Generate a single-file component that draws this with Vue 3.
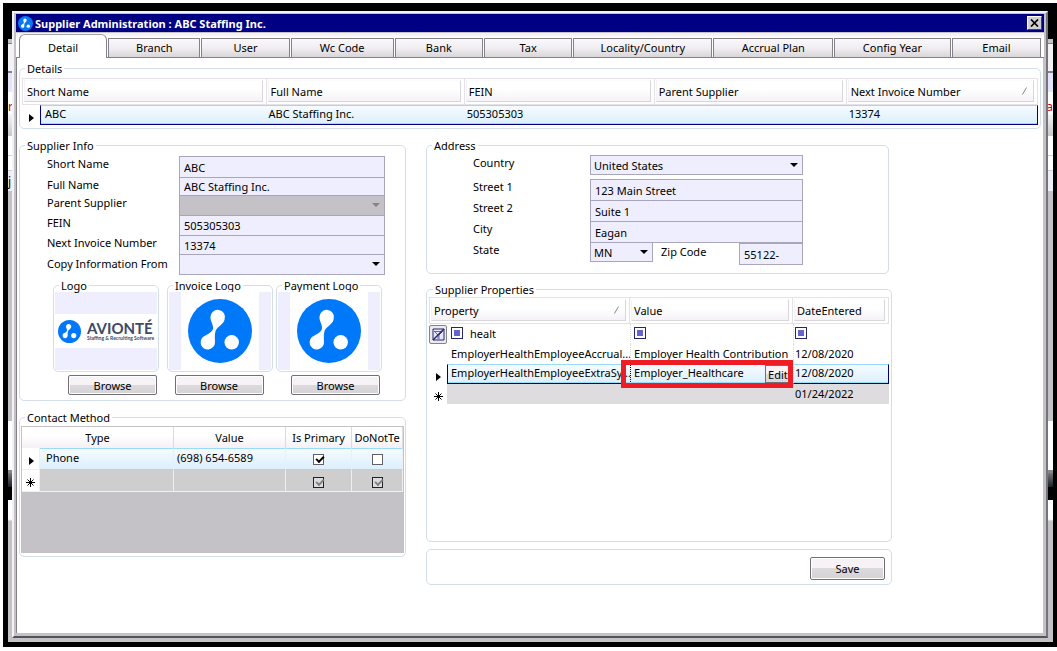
<script setup>
import { ref } from 'vue'

const tabs = [
  { name: 'Detail', share: 88 },
  { name: 'Branch', share: 92 },
  { name: 'User', share: 88 },
  { name: 'Wc Code', share: 103 },
  { name: 'Bank', share: 88 },
  { name: 'Tax', share: 88 },
  { name: 'Locality/Country', share: 140 },
  { name: 'Accrual Plan', share: 120 },
  { name: 'Config Year', share: 117 },
  { name: 'Email', share: 89 },
]
const active = ref('Detail')

const info = ref({ short: 'ABC', full: 'ABC Staffing Inc.', fein: '505305303', next: '13374' })
const address = ref({ street1: '123 Main Street', street2: 'Suite 1', city: 'Eagan', zip: '55122-' })
const filter = ref('healt')
</script>

<template>
  <div class="screen">
    <div class="backdrop" aria-hidden="true">
      <span class="scrap red left-r">r</span>
      <span class="scrap left-j">j</span>
      <span class="scrap red right-a">a</span>
    </div>

    <main class="window">
      <header class="titlebar">
        <svg class="app-icon" viewBox="0 0 64 64">
          <circle cx="32" cy="32" r="32" fill="#0a78f5" />
          <path
            fill="#fff"
            d="M22.4 18.3A7.3 7.3 0 1 1 36.6 20.5C35.5 26 28 28 27.3 33C26.5 37 27 40 27 43.3A7.2 7.2 0 1 1 17.5 36.5C22 34 25.5 32 25 28C24.5 24 22.4 22 22.4 18.3Z"
          />
          <circle cx="43.7" cy="43.3" r="7.2" fill="#fff" />
        </svg>
        <h1>Supplier Administration : ABC Staffing Inc.</h1>
        <button class="close" aria-label="Close">
          <svg viewBox="0 0 9 8"><path d="M1 .5L8 7.5M8 .5L1 7.5" stroke="#000" stroke-width="1.7" /></svg>
        </button>
      </header>

      <nav class="tabs">
        <button
          v-for="t in tabs"
          :key="t.name"
          class="tab"
          :class="{ active: active === t.name }"
          :style="{ flexGrow: t.share }"
          @click="active = t.name"
        >
          {{ t.name }}
        </button>
      </nav>

      <section class="page">
        <fieldset class="group details">
          <legend>Details</legend>
          <table class="grid details-grid">
            <colgroup>
              <col class="mark" /><col class="c-short" /><col class="c-full" /><col class="c-fein" /><col class="c-parent" /><col />
            </colgroup>
            <thead>
              <tr>
                <th colspan="2"><span>Short Name</span></th>
                <th><span>Full Name</span></th>
                <th><span>FEIN</span></th>
                <th><span>Parent Supplier</span></th>
                <th><span>Next Invoice Number <svg class="sort" viewBox="0 0 5 8"><path d="M.5 7.5L4.5 .5" /></svg></span></th>
              </tr>
            </thead>
            <tbody>
              <tr class="selected">
                <td class="marker"><i class="tri"></i></td>
                <td>ABC</td>
                <td>ABC Staffing Inc.</td>
                <td>505305303</td>
                <td></td>
                <td>13374</td>
              </tr>
            </tbody>
          </table>
        </fieldset>

        <div class="columns">
          <div class="col">
            <fieldset class="group info">
              <legend>Supplier Info</legend>
              <div class="info-form">
                <label for="i-short">Short Name</label>
                <input id="i-short" v-model="info.short" type="text" />
                <label for="i-full">Full Name</label>
                <input id="i-full" v-model="info.full" type="text" />
                <label for="i-parent">Parent Supplier</label>
                <div class="pick off"><select id="i-parent" disabled><option></option></select></div>
                <label for="i-fein">FEIN</label>
                <input id="i-fein" v-model="info.fein" type="text" />
                <label for="i-next">Next Invoice Number</label>
                <input id="i-next" v-model="info.next" type="text" />
                <label for="i-copy" class="mid">Copy Information From</label>
                <div class="pick"><select id="i-copy"><option></option></select></div>
              </div>

              <div class="logos">
                <div class="logo-cell">
                  <fieldset class="group logo-box">
                    <legend>Logo</legend>
                    <div class="canvas wide">
                      <div class="brand">
                        <svg class="brand-mark" viewBox="0 0 64 64">
                          <circle cx="32" cy="32" r="32" fill="#0078fa" />
                          <path
                            fill="#fff"
                            d="M22.4 18.3A7.3 7.3 0 1 1 36.6 20.5C35.5 26 28 28 27.3 33C26.5 37 27 40 27 43.3A7.2 7.2 0 1 1 17.5 36.5C22 34 25.5 32 25 28C24.5 24 22.4 22 22.4 18.3Z"
                          />
                          <circle cx="43.7" cy="43.3" r="7.2" fill="#fff" />
                        </svg>
                        <div class="brand-text"><b>AVIONTÉ</b><small>Staffing &amp; Recruiting Software</small></div>
                      </div>
                    </div>
                  </fieldset>
                  <button class="btn browse">Browse</button>
                </div>
                <div v-for="name in ['Invoice Logo', 'Payment Logo']" :key="name" class="logo-cell">
                  <fieldset class="group logo-box">
                    <legend>{{ name }}</legend>
                    <div class="canvas">
                      <div class="square">
                        <svg viewBox="0 0 64 64">
                          <circle cx="32" cy="32" r="32" fill="#0078fa" />
                          <path
                            fill="#fff"
                            d="M22.4 18.3A7.3 7.3 0 1 1 36.6 20.5C35.5 26 28 28 27.3 33C26.5 37 27 40 27 43.3A7.2 7.2 0 1 1 17.5 36.5C22 34 25.5 32 25 28C24.5 24 22.4 22 22.4 18.3Z"
                          />
                          <circle cx="43.7" cy="43.3" r="7.2" fill="#fff" />
                        </svg>
                      </div>
                    </div>
                  </fieldset>
                  <button class="btn browse">Browse</button>
                </div>
              </div>
            </fieldset>

            <fieldset class="group contact">
              <legend>Contact Method</legend>
              <div class="contact-area">
                <table class="contact-grid">
                  <colgroup><col class="mark" /><col class="c-type" /><col class="c-value" /><col class="c-prim" /><col /></colgroup>
                  <thead>
                    <tr>
                      <th colspan="2">Type</th>
                      <th>Value</th>
                      <th>Is Primary</th>
                      <th>DoNotTe</th>
                    </tr>
                  </thead>
                  <tbody>
                    <tr class="current">
                      <td class="marker"><i class="tri"></i></td>
                      <td>Phone</td>
                      <td>(698) 654-6589</td>
                      <td class="tick"><input type="checkbox" checked aria-label="Is primary" /></td>
                      <td class="tick"><input type="checkbox" aria-label="Do not text" /></td>
                    </tr>
                    <tr class="fresh">
                      <td class="marker">
                        <svg class="star" viewBox="0 0 9 9"><path d="M4.5 0V9M0 4.5H9M1.5 1.5L7.5 7.5M7.5 1.5L1.5 7.5" /></svg>
                      </td>
                      <td></td>
                      <td></td>
                      <td class="tick"><input type="checkbox" class="dim" checked aria-label="Is primary, new row" /></td>
                      <td class="tick"><input type="checkbox" class="dim" checked aria-label="Do not text, new row" /></td>
                    </tr>
                  </tbody>
                </table>
              </div>
            </fieldset>
          </div>

          <div class="col">
            <fieldset class="group address">
              <legend>Address</legend>
              <div class="address-form">
                <label for="a-country">Country</label>
                <div class="pick country"><select id="a-country"><option>United States</option></select></div>
                <label for="a-s1">Street 1</label>
                <input id="a-s1" v-model="address.street1" type="text" />
                <label for="a-s2">Street 2</label>
                <input id="a-s2" v-model="address.street2" type="text" />
                <label for="a-city">City</label>
                <input id="a-city" v-model="address.city" type="text" />
                <label for="a-state">State</label>
                <div class="state-row">
                  <div class="pick"><select id="a-state"><option>MN</option></select></div>
                  <label for="a-zip">Zip Code</label>
                  <input id="a-zip" v-model="address.zip" type="text" />
                </div>
              </div>
            </fieldset>

            <fieldset class="group props">
              <legend>Supplier Properties</legend>
              <table class="grid props-grid">
                <colgroup><col class="mark" /><col class="p-name" /><col class="p-value" /><col /></colgroup>
                <thead>
                  <tr>
                    <th colspan="2"><span>Property <svg class="sort" viewBox="0 0 5 8"><path d="M.5 7.5L4.5 .5" /></svg></span></th>
                    <th><span>Value</span></th>
                    <th><span>DateEntered</span></th>
                  </tr>
                </thead>
                <tbody>
                  <tr class="filter">
                    <td class="marker">
                      <button class="clear" aria-label="Clear filter">
                        <svg viewBox="0 0 13 13">
                          <path d="M1 1H12V12H1Z" fill="#e8e8fa" stroke="#26266a" />
                          <path d="M2 3.5H11M3 4L6 7V11M10 4L7 7V11" fill="none" stroke="#6464c8" />
                          <path d="M1 12L12 1" stroke="#26266a" stroke-width="1.4" />
                        </svg>
                      </button>
                    </td>
                    <td><div class="filter-cell"><button class="op" aria-label="Property operator"></button><input v-model="filter" type="text" aria-label="Property filter" /></div></td>
                    <td><div class="filter-cell"><button class="op" aria-label="Value operator"></button></div></td>
                    <td><div class="filter-cell"><button class="op" aria-label="Date operator"></button></div></td>
                  </tr>
                  <tr>
                    <td class="marker"></td>
                    <td>EmployerHealthEmployeeAccrual...</td>
                    <td>Employer Health Contribution</td>
                    <td>12/08/2020</td>
                  </tr>
                  <tr class="selected">
                    <td class="marker"><i class="tri"></i></td>
                    <td>EmployerHealthEmployeeExtraSy...</td>
                    <td class="editing">
                      <div class="edit-cell"><span>Employer_Healthcare</span><button class="edit">Edit</button></div>
                      <i class="callout"></i>
                    </td>
                    <td>12/08/2020</td>
                  </tr>
                  <tr class="fresh">
                    <td class="marker">
                      <svg class="star" viewBox="0 0 9 9"><path d="M4.5 0V9M0 4.5H9M1.5 1.5L7.5 7.5M7.5 1.5L1.5 7.5" /></svg>
                    </td>
                    <td></td>
                    <td></td>
                    <td>01/24/2022</td>
                  </tr>
                </tbody>
              </table>
            </fieldset>

            <div class="group save-bar"><button class="btn save">Save</button></div>
          </div>
        </div>
      </section>
    </main>
  </div>
</template>

<style>
body {
  background: #fff;
}
</style>

<style scoped>
* {
  box-sizing: border-box;
}
.screen {
  position: relative;
  display: flex;
  min-height: 100vh;
  padding: 8px 9px 9px 9px;
  border: 3px solid #fff;
  border-right: 0;
  border-bottom-width: 4px;
  background: #000;
  color: #000;
  font: 11px/15px 'Noto Sans', 'Open Sans', sans-serif;
}
.backdrop {
  position: absolute;
  inset: 36px 4px 5px 5px;
  overflow: hidden;
  background: linear-gradient(
    #c4c4c4 0 4px, #84818a 4px 5px, #f5f2f6 5px 32px, #84818a 32px 34px, #e4e4fa 34px 53px, #fff 53px 75px,
    #f5f3f6 75px, #c8c8c8 97px, #fff 97px 116px, #d0d0d8 116px 117px, #fff 117px 131px, #d0d0d8 131px 132px,
    #eeeef8 132px 152px, #c4c2c6 152px 382px, #fff 382px 431px, #88868a 431px 434px, #777 434px, #182028 448px,
    #000 448px 461px, #fff 461px 480px, #f0eef2 481px, #c4c2c6 482px
  );
}
.scrap {
  position: absolute;
  font-size: 12px;
}
.red {
  color: #d00000;
}
.left-r {
  left: 0;
  top: 60px;
}
.left-j {
  left: 0;
  top: 135px;
}
.right-a {
  right: 0;
  top: 60px;
}
.window {
  position: relative;
  display: flex;
  flex: 1;
  flex-direction: column;
  min-width: 0;
  padding: 1px;
  border: 2px solid;
  border-color: #f4f2f6 #77757c #55535a #f4f2f6;
  background: #c4c2c6;
  box-shadow: 0 0 0 1px #c4c2c6 inset;
}
.titlebar {
  display: flex;
  align-items: center;
  height: 18px;
  margin: 0 1px;
  padding: 0 2px;
  background: #000084;
  color: #fff;
}
.app-icon {
  width: 15px;
  height: 15px;
}
h1 {
  flex: 1;
  margin: 0 0 0 2px;
  font-size: 11px;
  line-height: 15px;
  white-space: nowrap;
}
button,
input,
select {
  margin: 0;
  padding: 0;
  border: 0;
  border-radius: 0;
  color: inherit;
  font: inherit;
  appearance: none;
}
.close {
  display: flex;
  align-items: center;
  justify-content: center;
  width: 15px;
  height: 14px;
  border: 1px solid;
  border-color: #fff #444 #444 #fff;
  background: #d0ced2;
}
.close svg {
  width: 9px;
  height: 8px;
}
.tabs {
  display: flex;
  gap: 1px;
  align-items: flex-end;
  height: 25px;
  margin: 1px 1px 0;
  padding: 0 3px;
  border-bottom: 1px solid #84818a;
  background: linear-gradient(#f5f0f5 0 2px, #fff 4px);
}
.tab {
  flex: 1 1 0;
  min-width: 0;
  height: 19px;
  padding-bottom: 1px;
  overflow: hidden;
  border: 1px solid #84818a;
  border-bottom-width: 0;
  background: linear-gradient(#faf8fb, #f0eef1 50%, #d8d6d9);
  white-space: nowrap;
}
.tab.active {
  height: 24px;
  margin-bottom: -1px;
  padding-top: 3px;
  border-color: #a4a2aa #84818a;
  border-radius: 6px 6px 0 0;
  background: #fff;
}
.page {
  flex: 1;
  margin: 0 2px 2px 1px;
  padding: 3px 2px 2px 2px;
  border-left: 1px solid #84818a;
  background: #fff;
}
.group {
  min-width: 0;
  margin: 0;
  padding: 0;
  border: 1px solid #d4dee8;
  border-radius: 5px;
}
legend {
  height: 15px;
  margin-left: 4px;
  padding: 0 2px;
  line-height: 15px;
}
table {
  width: 100%;
  border-collapse: separate;
  border-spacing: 0;
  table-layout: fixed;
}
th {
  padding: 0;
  font-weight: normal;
  text-align: left;
}
td {
  padding: 0;
  overflow: hidden;
  white-space: nowrap;
}
.mark {
  width: 18px;
}
.grid th {
  height: 27px;
  padding: 1px 3px 2px 1px;
  border: 1px solid #e4e2e6;
  border-left-width: 0;
}
.grid th:first-child {
  border-left-width: 1px;
}
.grid th span {
  display: flex;
  align-items: center;
  justify-content: space-between;
  height: 22px;
  padding: 0 6px 0 2px;
  border: 1px solid #f4f2f6;
  border-color: #fbfafc #d8d6da #d8d6da #f4f2f6;
  background: linear-gradient(#fff 40%, #f5f2f7);
}
.sort {
  width: 5px;
  height: 8px;
}
.sort path {
  fill: none;
  stroke: #888;
}
.details {
  padding: 2px 2px 3px;
}
.details legend {
  margin-left: 3px;
}
.c-short {
  width: 22.3%;
}
.c-full {
  width: 19.5%;
}
.c-fein {
  width: 18.7%;
}
.c-parent {
  width: 18.9%;
}
.marker {
  text-align: center;
}
.tri {
  display: inline-block;
  margin-left: 1px;
  border: 4px solid transparent;
  border-right-width: 0;
  border-left: 5px solid #000;
  vertical-align: -2px;
}
.star {
  display: inline-block;
  width: 9px;
  height: 9px;
  vertical-align: -2px;
}
.star path {
  fill: none;
  stroke: #000;
}
.selected td:not(.marker) {
  height: 20px;
  padding: 0 4px 3px;
  border-top: 1px solid #9adcf8;
  border-bottom: 1px solid #000084;
  background: linear-gradient(#f6fbff, #dceffc);
  box-shadow: 0 -1px 0 #9adcf8 inset;
}
.details-grid .selected td:nth-child(n + 3) {
  padding-left: 2px;
}
.selected td:nth-child(2) {
  border-left: 1px solid #000084;
}
.selected td:last-child {
  border-right: 1px solid #000084;
}
.columns {
  display: grid;
  grid-template-columns: minmax(0, 387px) minmax(0, 466px);
  gap: 20px;
  margin-top: 9px;
}
.info {
  height: 263px;
  padding: 3px 20px 0 27px;
}
.info > legend {
  margin-left: -22px;
}
.info-form {
  display: grid;
  grid-template-rows: 21px 18px 20px 20px 19px 20px;
  grid-template-columns: 132px minmax(0, 1fr);
}
.info-form > label {
  white-space: nowrap;
}
.info-form > .mid {
  padding-top: 2px;
}
input[type='text'],
.pick select {
  display: block;
  width: 100%;
  height: calc(100% + 1px);
  padding: 0 4px;
  border: 1px solid #a8a6bc;
  background: #eeeeff;
}
.pick {
  position: relative;
}
.pick::after {
  position: absolute;
  top: 8px;
  right: 5px;
  border: 4px solid transparent;
  border-top-color: #000;
  border-bottom-width: 0;
  content: '';
  pointer-events: none;
}
.pick.off select {
  background: #c4c2c6;
  opacity: 1;
}
.pick.off::after {
  border-top-color: #848288;
}
.pick select {
  padding: 0 3px;
}
.logos {
  display: grid;
  grid-template-columns: 114px 109px 106px;
  margin: 4px 0 0 6px;
}
.logo-cell {
  display: flex;
  flex-direction: column;
  gap: 3px;
  width: 106px;
}
.logo-box {
  height: 94px;
  padding: 0 1px;
}
.logo-box legend {
  white-space: nowrap;
}
.canvas {
  display: flex;
  align-items: center;
  height: 78px;
  padding: 0 12px;
  margin-top: -1px;
  background: #eeeeff;
}
.canvas.wide {
  padding: 0;
}
.square {
  display: flex;
  flex: 1;
  align-items: center;
  justify-content: center;
  height: 78px;
  background: #fff;
}
.square svg {
  width: 64px;
  height: 64px;
}
.brand {
  display: flex;
  flex: 1;
  gap: 6px;
  align-items: center;
  height: 34px;
  padding-left: 3px;
  background: #fff;
}
.brand-mark {
  flex: none;
  width: 23px;
  height: 23px;
}
.brand-text {
  display: flex;
  flex-direction: column;
  color: #3c4a68;
  font-family: Lato, sans-serif;
  white-space: nowrap;
}
.brand-text b {
  font-size: 15px;
  line-height: 14px;
}
.brand-text small {
  font-size: 5px;
  font-weight: bold;
  line-height: 7px;
}
.btn {
  border: 1px solid #707074;
  border-radius: 2px;
  background: linear-gradient(#f6f2f6 50%, #dddadd 50%, #d4d2d5);
  box-shadow: 0 0 0 1px #fff inset;
}
.browse {
  align-self: flex-end;
  width: 89px;
  height: 20px;
  margin-right: 2px;
}
.logo-cell:nth-child(2) .browse {
  align-self: center;
}
.contact {
  height: 147px;
  margin-top: 9px;
  padding: 1px 1px 1px;
}
.contact-area {
  height: 127px;
  border: 1px solid #c4c2c6;
  background: #c4c2c6;
}
.c-type {
  width: 134px;
}
.c-value {
  width: 112px;
}
.c-prim {
  width: 66px;
}
.contact-grid th {
  height: 21px;
  overflow: hidden;
  border-right: 1px solid #dcdade;
  background: linear-gradient(#fff 40%, #f4f0f6);
  text-align: center;
  white-space: nowrap;
}
.contact-grid td {
  height: 22px;
  border-right: 1px solid #f0eef2;
  border-bottom: 1px solid #f0eef2;
}
.contact-grid td:nth-child(2) {
  padding-left: 6px;
}
.contact-grid td:nth-child(3) {
  padding-left: 3px;
}
.contact-grid .marker {
  background: #fff;
}
.current td:not(.marker) {
  padding-bottom: 3px;
  border-top: 1px solid #9adcf8;
  border-bottom: 1px solid #9adcf8;
  background: linear-gradient(#f6fbff, #dceffc);
}
.contact-grid .fresh td:not(.marker) {
  background: #cecece;
}
.tick {
  text-align: center;
}
input[type='checkbox'] {
  position: relative;
  width: 11px;
  height: 11px;
  border: 1px solid #606064;
  background: #fff;
  vertical-align: -3px;
}
input[type='checkbox']:checked::after {
  position: absolute;
  top: 1px;
  left: 2px;
  width: 6px;
  height: 3px;
  border: solid #000;
  border-width: 0 0 2px 2px;
  content: '';
  transform: rotate(-45deg);
}
input.dim {
  border-color: #222;
  background: #dcdcdc;
}
input.dim:checked::after {
  border-color: #808080;
}
.address {
  width: 463px;
  max-width: 100%;
  height: 136px;
  padding: 2px 85px 0 46px;
}
.address > legend {
  margin-left: -41px;
}
.address-form {
  display: grid;
  grid-template-rows: 24px 21px 21px 21px 21px;
  grid-template-columns: 117px minmax(0, 1fr);
}
.pick.country {
  height: 19px;
}
.state-row {
  display: grid;
  grid-template-columns: 63px 86px minmax(0, 1fr);
}
.state-row .pick {
  height: 19px;
}
.state-row label {
  padding: 2px 0 0 8px;
}
.state-row input {
  margin-top: 1px;
}
.props {
  height: 260px;
  margin-top: 8px;
  padding: 0 2px;
}
.p-name {
  width: 183px;
}
.p-value {
  width: 163px;
}
.props-grid td {
  height: 20px;
  padding: 0 0 2px 4px;
}
.props-grid .selected td:nth-child(2) {
  padding-right: 0;
  padding-left: 3px;
}
.props-grid td:nth-child(n + 3),
.props-grid .selected td:nth-child(n + 3) {
  padding-left: 3px;
  border-left: 1px dotted #dcdade;
}
.props-grid td:last-child,
.props-grid .selected td:last-child {
  padding-left: 1px;
}
.props-grid .marker {
  padding: 0;
}
.props-grid .fresh td:not(.marker) {
  background: #dedcde;
}
.clear {
  display: flex;
  align-items: center;
  justify-content: center;
  width: 18px;
  height: 19px;
  border: 1px solid #848288;
  border-radius: 2px;
  background: #eceaee;
}
.clear svg {
  width: 13px;
  height: 13px;
}
.filter-cell {
  display: flex;
  gap: 7px;
  align-items: center;
  height: 18px;
}
.op {
  flex: none;
  width: 12px;
  height: 12px;
  border: 1px solid #26266a;
  background: #6464cc;
  box-shadow: 0 0 0 2px #fff inset;
}
.filter-cell input[type='text'] {
  height: 15px;
  padding: 0;
  border: 0;
  background: none;
}
.props-grid .selected td.editing {
  position: relative;
  overflow: visible;
  padding-right: 0;
  padding-bottom: 0;
  border-top: 1px dotted #000;
  border-bottom: 1px dotted #000;
  border-left: 1px dotted #000;
}
.edit-cell {
  display: flex;
  justify-content: space-between;
  height: 18px;
}
.edit {
  width: 28px;
  height: 18px;
  padding-left: 2px;
  border: 1px solid #707074;
  background: linear-gradient(#f6f2f6 50%, #dddadd 50%);
  text-align: left;
}
.callout {
  position: absolute;
  inset: -5px 0 -5px -10px;
  border: 5px solid #ee1c24;
  pointer-events: none;
}
.save-bar {
  display: flex;
  justify-content: flex-end;
  height: 36px;
  margin-top: 7px;
  padding: 7px 6px 0 0;
}
.save {
  width: 75px;
  height: 23px;
}
</style>
